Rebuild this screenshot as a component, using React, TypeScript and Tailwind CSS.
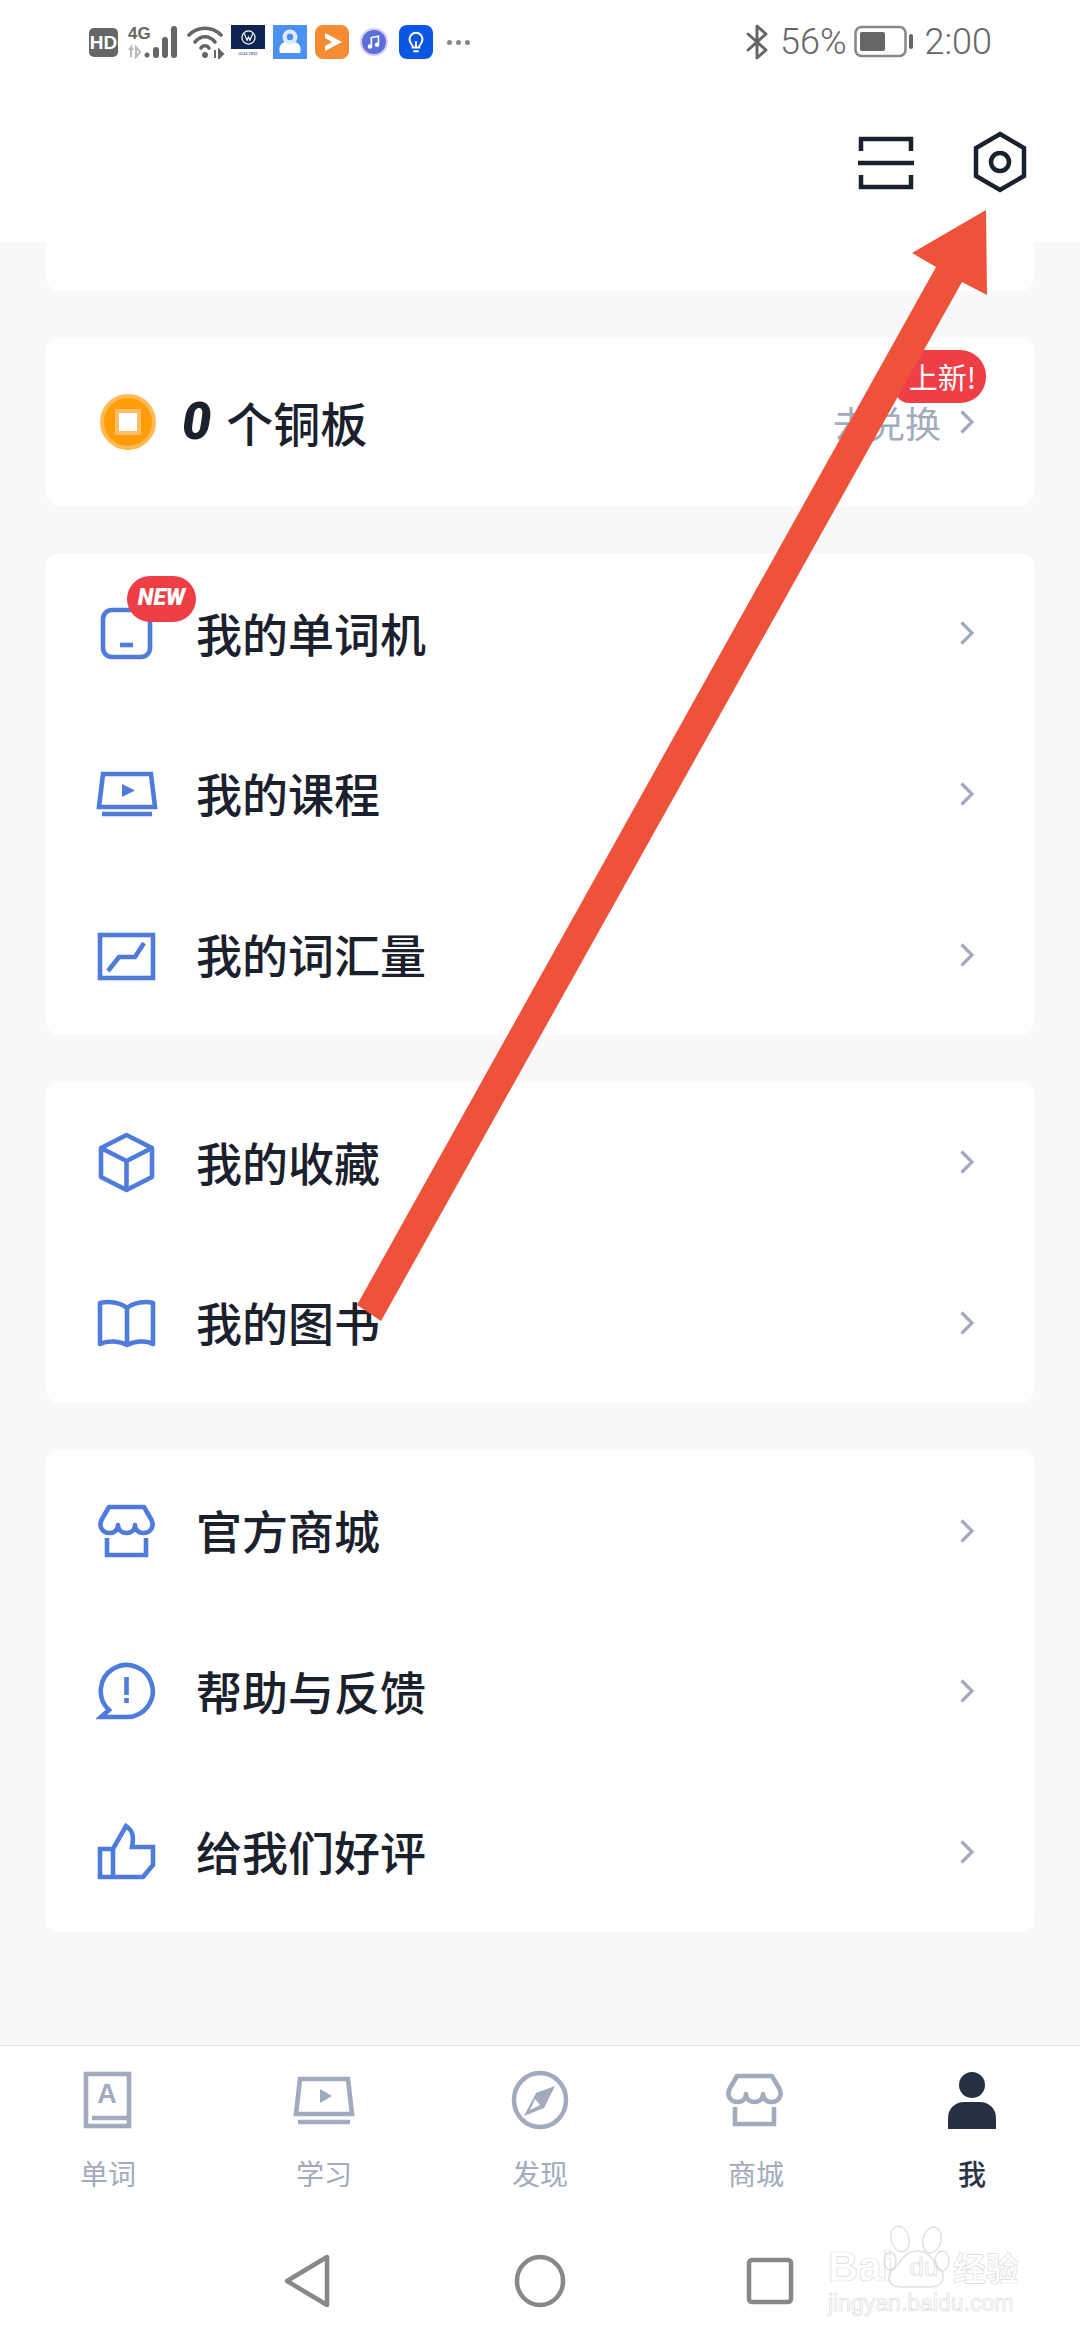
import React from "react";

const BLUE = "#4f7bdc";
const GRAY = "#a1abbd";

const Svg = ({ children, color = BLUE, sw = 4.6 }: { children: React.ReactNode; color?: string; sw?: number }) => (
  <svg viewBox="0 0 64 64" className="w-[64px] h-[64px] shrink-0" fill="none" stroke={color} strokeWidth={sw}>
    {children}
  </svg>
);

const storePaths = (
  <>
    <path d="M13 8 H48 L55 20 C59 27 55 34 47 34 C42 34 39 30 39 26 C39 32 34 34 30.5 34 C27 34 22 32 22 26 C22 30 19 34 14 34 C6 34 2 27 6 20 Z" strokeLinejoin="round" />
    <path d="M11 39 V56 H50 V39" />
  </>
);

const coursePaths = (color: string) => (
  <>
    <path d="M7 12 H55 L59 45 H3 Z" />
    <path d="M6 52 H56" />
    <path d="M26 22 L39 28.5 L26 35 Z" fill={color} stroke="none" />
  </>
);

const Chevron = () => (
  <svg viewBox="0 0 14 24" className="w-[14px] h-[24px] shrink-0" fill="none" stroke="#a1abbd" strokeWidth={3.2}>
    <path d="M1.5 1.5 L12 12 L1.5 22.5" />
  </svg>
);

const rows1 = [
  {
    label: "我的单词机",
    badge: true,
    icon: (
      <Svg>
        <rect x="7" y="9" width="47" height="47" rx="9" />
        <path d="M24 44 H37" />
      </Svg>
    ),
  },
  { label: "我的课程", icon: <Svg>{coursePaths(BLUE)}</Svg> },
  {
    label: "我的词汇量",
    icon: (
      <Svg>
        <rect x="4" y="12" width="53" height="43" />
        <path d="M12 48 L23 34 H39 L48 20" />
      </Svg>
    ),
  },
];

const rows2 = [
  {
    label: "我的收藏",
    icon: (
      <Svg>
        <path d="M30.5 5 L56 18 V47 L30.5 60 L5 47 V18 Z" strokeLinejoin="round" />
        <path d="M5 18 L30.5 31 L56 18 M30.5 31 V60" />
      </Svg>
    ),
  },
  {
    label: "我的图书",
    icon: (
      <Svg>
        <path d="M31 17 C24 11 12 10 4 12 V53 C12 49 24 50 31 54 C38 50 50 49 57 53 V12 C50 10 38 11 31 17 Z M31 17 V54" strokeLinejoin="round" />
      </Svg>
    ),
  },
];

const rows3 = [
  { label: "官方商城", icon: <Svg>{storePaths}</Svg> },
  {
    label: "帮助与反馈",
    icon: (
      <Svg>
        <path d="M31 58 H5 L13 51 A26 26 0 1 1 31 58 Z" />
        <path d="M30.5 18 V36 M30.5 39 V44" />
      </Svg>
    ),
  },
  {
    label: "给我们好评",
    icon: (
      <Svg>
        <path d="M4 29 H17 L30 6 C37 11 38 16 36 27 H57 V45 L47 57 H4 Z M17 29 V57" />
      </Svg>
    ),
  },
];

type RowData = { label: string; icon: React.ReactNode; badge?: boolean };

const Row = ({ r }: { r: RowData }) => (
  <div className="relative flex items-center h-[160.67px] pl-[50px] pr-[60px]">
    {r.icon}
    <span className="ml-[36px] pb-[3px] flex-1 text-[46px] leading-[60px] font-medium text-[#1a202c]">{r.label}</span>
    <Chevron />
    {r.badge && (
      <span className="absolute left-[81px] top-[23px] w-[69px] h-[46px] rounded-[23px] bg-[#ef3e45] text-white text-center text-[23px] leading-[44px] font-black italic font-['Roboto',sans-serif]">
        NEW
      </span>
    )}
  </div>
);

const Card = ({ rows }: { rows: RowData[] }) => (
  <div className="bg-white rounded-[14px] mt-[47px]">
    {rows.map((r) => (
      <Row key={r.label} r={r} />
    ))}
  </div>
);

const Tab = ({ icon, label, active }: { icon: React.ReactNode; label: string; active?: boolean }) => (
  <div className="flex flex-col items-center">
    {icon}
    <span className={`mt-[21px] text-[28px] leading-[40px] ${active ? "text-[#2a3244] font-medium" : "text-[#a1abbd]"}`}>{label}</span>
  </div>
);

const StatusBar = () => (
  <div className="h-[84px] flex items-center justify-between pl-[89px] pr-[88px] text-[#666666]">
    <div className="flex items-center">
      <span className="w-[29px] h-[29px] rounded-[5px] bg-[#666666] text-white text-[19px] leading-[29px] text-center font-bold font-['Liberation_Sans',sans-serif]">
        HD
      </span>
      <svg viewBox="0 0 50 34" className="ml-[10px] w-[50px] h-[34px]" fill="#666">
        <text x="0" y="14" fontSize="17" fontWeight="700" fontFamily="Liberation Sans">4G</text>
        <path d="M3 32 V22 L1 25 M3 22 L5 25 M8 22 V32 L12 27 Z" stroke="#bbb" strokeWidth="2" fill="none" />
        <circle cx="19" cy="30" r="2.5" />
        <rect x="25" y="22" width="6" height="11" rx="3" />
        <rect x="34" y="12" width="6" height="21" rx="3" />
        <rect x="43" y="1" width="6" height="32" rx="3" />
      </svg>
      <svg viewBox="0 0 38 34" className="ml-[9px] w-[38px] h-[34px]" fill="none" stroke="#666" strokeWidth="3.6" strokeLinecap="round">
        <path d="M2 10 C11 1 25 1 34 10" />
        <path d="M8 17 C14 10 22 10 28 17" />
        <path d="M14 23 C16 20 20 20 22 23" />
        <circle cx="18" cy="30" r="3" fill="#666" stroke="none" />
        <path d="M28 25 V33 M36 29 L32 25 V33 Z" strokeWidth="2" strokeLinecap="butt" fill="#666" />
      </svg>
      <div className="ml-[6px] w-[34px] h-[34px] flex flex-col items-center">
        <div className="w-[34px] h-[24px] bg-[#0d2350] flex items-center justify-center">
          <svg viewBox="0 0 16 16" className="w-[15px] h-[15px]" fill="none" stroke="#fff" strokeWidth="1.3">
            <circle cx="8" cy="8" r="7" />
            <path d="M3.5 4 L6.5 11 L8 7.5 L9.5 11 L12.5 4" />
          </svg>
        </div>
        <span className="text-[4px] leading-[10px] text-[#1a2a4a] font-['Liberation_Sans',sans-serif]">0544 2832</span>
      </div>
      <div className="ml-[8px] w-[34px] h-[34px] bg-[#4b90f4] flex items-center justify-center">
        <svg viewBox="0 0 34 34" className="w-[34px] h-[34px]">
          <path d="M7 28 C5 22 8 18 12 17 H22 C26 18 29 22 27 28 Z" fill="#fff" />
          <circle cx="17" cy="12" r="7.5" fill="#dfeafd" />
          <circle cx="17" cy="12" r="3.2" fill="#4b90f4" />
        </svg>
      </div>
      <div className="ml-[8px] w-[34px] h-[34px] rounded-[8px] bg-[#f58b33] flex items-center justify-center">
        <svg viewBox="0 0 34 34" className="w-[34px] h-[34px]">
          <path d="M10 8 L27 17 L10 26 Z" fill="#fff" />
          <path d="M10 13 L17 17 L10 21 Z" fill="#f58b33" />
        </svg>
      </div>
      <div className="ml-[11px] w-[28px] h-[28px] rounded-full bg-[#5a70d8] border-2 border-[#d9c9f5] flex items-center justify-center">
        <svg viewBox="0 0 18 18" className="w-[16px] h-[16px]" fill="none" stroke="#fff" strokeWidth="1.8">
          <path d="M6 14 V4 L14 2.5 V12" />
          <circle cx="4.5" cy="14" r="1.6" fill="#fff" />
          <circle cx="12.5" cy="12" r="1.6" fill="#fff" />
        </svg>
      </div>
      <div className="ml-[11px] w-[34px] h-[34px] rounded-[8px] bg-[#0b57e5] flex items-center justify-center">
        <svg viewBox="0 0 24 24" className="w-[26px] h-[26px]" fill="none" stroke="#fff" strokeWidth="1.8">
          <path d="M9 17 C9 14 6 13 6 9.5 A6 6 0 0 1 18 9.5 C18 13 15 14 15 17 Z M9.5 20.5 H14.5 M12 17 V11" />
        </svg>
      </div>
      <div className="ml-[14px] flex gap-[4px]">
        <span className="w-[5px] h-[5px] rounded-full bg-[#888]" />
        <span className="w-[5px] h-[5px] rounded-full bg-[#888]" />
        <span className="w-[5px] h-[5px] rounded-full bg-[#888]" />
      </div>
    </div>
    <div className="flex items-center font-['Roboto',sans-serif] font-light text-[36px] leading-[40px]">
      <svg viewBox="0 0 24 36" className="w-[24px] h-[36px]" fill="none" stroke="#666" strokeWidth="3" strokeLinejoin="round" strokeLinecap="round">
        <path d="M2 10 L20 26 L11 34 V2 L20 10 L2 26" />
      </svg>
      <span className="ml-[10px]">56%</span>
      <svg viewBox="0 0 60 34" className="ml-[7px] w-[60px] h-[34px]">
        <rect x="1.5" y="2" width="50" height="29" rx="6" fill="none" stroke="#888" strokeWidth="2.5" />
        <rect x="6" y="7" width="25" height="19" rx="2" fill="#666" />
        <rect x="55" y="9" width="4" height="15" rx="2" fill="#666" />
      </svg>
      <span className="ml-[11px]">2:00</span>
    </div>
  </div>
);

export default function App() {
  return (
    <div className="relative w-[1080px] h-[2340px] flex flex-col bg-[#f8f8f8] overflow-hidden font-['Noto_Sans_CJK_SC','Noto_Sans',sans-serif]">
      <div className="bg-white">
        <StatusBar />
        <div className="h-[158px] flex items-start justify-end pt-[47px] pr-[52px] gap-[58px]">
          <svg viewBox="0 0 56 56" className="mt-[4px] w-[56px] h-[56px]" fill="none" stroke="#1a202c" strokeWidth="4.5">
            <path d="M3 16 V4 H53 V16 M0 28 H56 M3 40 V52 H53 V40" />
          </svg>
          <svg viewBox="0 0 56 62" className="w-[56px] h-[62px]" fill="none" stroke="#1a202c" strokeWidth="4.5">
            <path d="M28 3 L52 17 V45 L28 59 L4 45 V17 Z" />
            <circle cx="28" cy="31" r="9" />
          </svg>
        </div>
      </div>

      <div className="flex-1 px-[46px] flex flex-col">
        <div className="h-[49px] bg-white rounded-b-[14px]" />

        <div className="relative mt-[47px] h-[168px] bg-white rounded-[14px] flex items-center pl-[54px] pr-[60px]">
          <div className="w-[56px] h-[56px] rounded-full bg-[#ff9c0a] border-[4px] border-[#ffb955] flex items-center justify-center">
            <div className="w-[26px] h-[26px] bg-white border-[4px] border-[#ffbe66]" />
          </div>
          <span className="ml-[26px] text-[52px] leading-[60px] font-black italic text-[#1a202c] font-['Roboto',sans-serif]">0</span>
          <span className="ml-[15px] flex-1 text-[47px] leading-[60px] font-medium text-[#1a202c]">个铜板</span>
          <span className="mr-[19px] text-[36px] leading-[50px] text-[#a1abbd]">去兑换</span>
          <Chevron />
          <span className="absolute right-[48px] top-[12px] w-[91px] h-[53px] rounded-l-[26px] rounded-tr-[26px] rounded-br-[26px] rounded-bl-[14px] bg-[#ef3e45] text-white text-right pr-[10px] text-[29px] leading-[52px]">
            上新!
          </span>
        </div>

        <Card rows={rows1} />
        <Card rows={rows2} />
        <Card rows={rows3} />
      </div>

      <div className="h-[295px] bg-white border-t border-[#e8e8e8]">
        <div className="grid grid-cols-5 pt-[22px]">
          <Tab
            label="单词"
            icon={
              <Svg color={GRAY}>
                <rect x="10" y="6" width="43" height="52" />
                <path d="M16 50 H53" />
                <text x="31" y="35" textAnchor="middle" fontSize="27" fontWeight="700" fill={GRAY} stroke="none" fontFamily="Liberation Sans">A</text>
              </Svg>
            }
          />
          <Tab
            label="学习"
            icon={
              <Svg color={GRAY}>
                <path d="M8 11 H56 L60 46 H4 Z" />
                <path d="M6 54 H58" />
                <path d="M28 21 L40 28 L28 35 Z" fill={GRAY} stroke="none" />
              </Svg>
            }
          />
          <Tab
            label="发现"
            icon={
              <Svg color={GRAY} sw={4.5}>
                <ellipse cx="32" cy="32" rx="26" ry="27" />
                <path d="M47 18 L28 25 L16 48 L36 40 Z" fill={GRAY} stroke="none" />
                <path d="M22 42 L27 31 L32 37 Z" fill="#fff" stroke="none" />
              </Svg>
            }
          />
          <Tab label="商城" icon={<Svg color={GRAY}>{storePaths}</Svg>} />
          <Tab
            label="我"
            active
            icon={
              <svg viewBox="0 0 64 64" className="w-[64px] h-[64px]" fill="#272f45">
                <circle cx="32" cy="17" r="13" />
                <path d="M8 61 V50 C8 40 16 34 24 34 H40 C48 34 56 40 56 50 V61 Z" />
              </svg>
            }
          />
        </div>
        <div className="mt-[56px] flex justify-center gap-[166px]">
          <svg viewBox="0 0 64 64" className="w-[64px] h-[64px]" fill="none" stroke="#888" strokeWidth="4.5" strokeLinejoin="round">
            <path d="M9 32 L49 8 V56 Z" />
          </svg>
          <svg viewBox="0 0 64 64" className="w-[64px] h-[64px]" fill="none" stroke="#888" strokeWidth="4.5">
            <ellipse cx="32" cy="32" rx="23" ry="24" />
          </svg>
          <svg viewBox="0 0 64 64" className="w-[64px] h-[64px]" fill="none" stroke="#888" strokeWidth="4.5">
            <rect x="11" y="11" width="42" height="42" rx="3" />
          </svg>
        </div>
      </div>

      {/* watermark */}
      <div className="absolute left-[828px] top-[2225px] w-[196px] h-[94px]">
        <svg viewBox="0 0 196 94" className="absolute inset-0 w-[196px] h-[94px]" fill="none" stroke="#e0e0e0" strokeWidth="1.4">
          <ellipse cx="72" cy="14" rx="9" ry="13" transform="rotate(-15 72 14)" />
          <ellipse cx="104" cy="15" rx="9" ry="13" transform="rotate(15 104 15)" />
          <ellipse cx="62" cy="36" rx="6" ry="9" />
          <ellipse cx="114" cy="36" rx="7" ry="10" />
          <path d="M90 26 C102 26 106 38 112 44 C118 50 116 62 102 62 H74 C60 62 56 50 66 44 C72 38 76 26 90 26 Z" />
        </svg>
        <div className="absolute left-0 top-[24px] h-[36px] flex items-center text-transparent font-['Liberation_Sans',sans-serif] [-webkit-text-stroke:0.7px_#dcdcdc]">
          <span className="w-[69px] text-[42px] leading-[36px] font-bold">Bai</span>
          <span className="w-[54px] text-[26px] leading-[36px] text-center">du</span>
          <span className="ml-[2px] text-[33px] leading-[36px] font-bold font-['Noto_Sans_CJK_SC',sans-serif]">经验</span>
        </div>
        <span className="absolute left-0 top-[64px] whitespace-nowrap text-[23px] leading-[28px] text-transparent font-['Liberation_Sans',sans-serif] [-webkit-text-stroke:0.7px_#dcdcdc]">
          jingyan.baidu.com
        </span>
      </div>

      {/* annotation arrow */}
      <svg viewBox="0 0 1080 2340" className="absolute inset-0 w-[1080px] h-[2340px] pointer-events-none">
        <polygon points="986,210 912,253 936,267 357,1305 381,1321 962,282 987,295" fill="#ee523b" />
      </svg>
    </div>
  );
}
